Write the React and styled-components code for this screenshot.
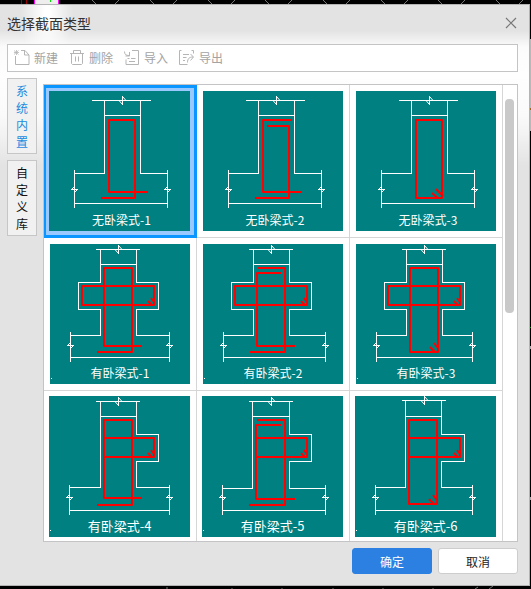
import React, { useState } from "react";
import styled, { createGlobalStyle } from "styled-components";

const GlobalStyle = createGlobalStyle`
  *, *::before, *::after { box-sizing: border-box; }
  body {
    margin: 0;
    background: #000;
    font-family: "Noto Sans CJK SC", "Noto Sans", sans-serif;
    font-size: 12px;
  }
  button { font: inherit; color: inherit; }
`;

const Desktop = styled.div`
  position: relative;
  display: flex;
  height: 100vh;
  min-height: 400px;
  padding: 4px 1px 3px 0;
  overflow: hidden;
`;

const Backdrop = styled.svg`
  position: absolute;
  inset: 0;
  width: 100%;
  height: 100%;
`;

const Dialog = styled.section`
  position: relative;
  flex: 1;
  min-width: 0;
  display: flex;
  flex-direction: column;
  border: solid #b4b4b4;
  border-width: 1px 1px 1px 0;
  background:
    radial-gradient(ellipse 26px 60px at 47px 8px, #ffffff 10%, #ffffff00 100%),
    linear-gradient(#e3e3e3 26px, #fbfbfb 42px, #fefefe 70px, #fafafa 110px, #f0f0f0 135px, #e3e3e3 160px);
`;

const TitleBar = styled.header`
  display: flex;
  align-items: center;
  justify-content: space-between;
  height: 39px;
  padding: 0 12px 3px 7px;
`;

const Title = styled.h1`
  margin: 0;
  font-size: 14px;
  line-height: 20px;
  font-weight: 400;
  color: #333;
`;

const CloseButton = styled.button`
  display: flex;
  padding: 0;
  border: 0;
  background: none;
  color: #777;
`;

const Toolbar = styled.div`
  display: flex;
  align-items: center;
  gap: 11px;
  height: 28px;
  margin: 0 11px 0 7px;
  padding: 0 6px;
  border: 1px solid #c3c4c6;
  background: #fff;
`;

const Tool = styled.button`
  display: flex;
  align-items: center;
  gap: 4px;
  padding: 0;
  border: 0;
  background: none;
  color: #a3a3a3;
  line-height: 18px;
`;

const Body = styled.div`
  flex: 1;
  min-height: 0;
  display: flex;
  gap: 6px;
  padding: 6px 11px 0 7px;
`;

const TabList = styled.div`
  display: flex;
  flex-direction: column;
  gap: 6px;
`;

const Tab = styled.button`
  width: 30px;
  padding: 3px 8px;
  border: 1px solid #c6c6c6;
  background: #f1f1f1;
  color: ${(p) => (p.$active ? "#1b8be0" : "#111")};
  line-height: 17px;
  word-break: break-all;
`;

const Gallery = styled.div`
  flex: 1;
  min-width: 0;
  display: flex;
  margin-top: 6px;
  border: 1px solid #c4c4c6;
  background: #fff;
  overflow: hidden;
`;

const Grid = styled.div`
  flex: 1;
  display: grid;
  grid-template-columns: repeat(auto-fill, 153px);
  grid-auto-rows: 153px;
  align-content: start;
`;

const Cell = styled.button`
  display: grid;
  place-items: end;
  padding: ${(p) => (p.$selected ? "0 5px 5px 0" : "0 6px 6px 0")};
  border: solid #d6d6d6;
  border-width: 0 1px 1px 0;
  background: #fff;
  ${(p) =>
    p.$selected &&
    `
    border-color: #0a95ff;
    box-shadow: inset 2px 3px #0a95ff, inset -2px -2px #0a95ff;
    background: #99c9ff;
  `}
`;

const Figure = styled.figure`
  display: grid;
  width: ${(p) => p.$width}px;
  height: ${(p) => p.$height}px;
  margin: ${(p) => (p.$selected ? "0 1px 1px 0" : "0")};
  background: #008080;
  color: #fff;
`;

const Drawing = styled.svg`
  grid-area: 1 / 1;
`;

const Caption = styled.figcaption`
  grid-area: 1 / 1;
  align-self: end;
  padding-bottom: 2px;
  padding-left: ${(p) => (p.$shift ? 4 : 0)}px;
  text-align: center;
  font-size: ${(p) => (p.$large ? 13 : 12)}px;
  line-height: 18px;
`;

const ScrollTrack = styled.div`
  flex: none;
  width: 14px;
  padding: 14px 3px 0 2px;
`;

const ScrollThumb = styled.div`
  height: 214px;
  border-radius: 4px;
  background: #c9c9c9;
`;

const Footer = styled.footer`
  display: flex;
  justify-content: flex-end;
  gap: 6px;
  padding: 6px 11px 11px;
`;

const Action = styled.button`
  width: 80px;
  height: 26px;
  padding: 0;
  border: 1px solid ${(p) => (p.$primary ? "#2b80e2" : "#cdcdcd")};
  border-radius: 3px;
  background: ${(p) => (p.$primary ? "#2b80e2" : "#fff")};
  color: ${(p) => (p.$primary ? "#fff" : "#222")};
`;

const toolIcons = {
  add: (
    <>
      <path d="M7 .5h4l4 4.500v9.500h-13.500v-8.500M10.500 .5v4.500h4.500" />
      <path d="M0 .5l4.500 4M4.500 .5l-4.500 4M0 2.500h5M2.500 0v5" strokeWidth=".8" />
    </>
  ),
  remove: (
    <>
      <path d="M1 3.500h14M4.500 3.500v-3h7v3M2.500 3.500v10l1 1h9l1-1v-10" />
      <path d="M6.500 6.500v5M9.500 6.500v5" />
    </>
  ),
  load: (
    <>
      <path d="M8 .5h6.500v14h-12.500v-5" />
      <path d="M.5 1.500c0 3 1.500 4 4.500 4M5.500 2v4h-4" />
      <path d="M3.500 8.500h2M7 8.500h4.500M5 11.500h6" />
    </>
  ),
  save: (
    <>
      <path d="M2.500 .5h-2v14h8M12.500 .5h2v3" />
      <path d="M4 4.500h6M4 7.500h3.500M4 10.500h2" />
      <path d="M8.500 12.500c0-4 2-5.500 5.500-5.500M11.500 4l3 3-3 3.500" />
    </>
  ),
};

const tools = [
  { icon: "add", label: "新建" },
  { icon: "remove", label: "删除" },
  { icon: "load", label: "导入" },
  { icon: "save", label: "导出" },
];

const base = (c1, c2, y, f1, f2, top, bottom, v1, v2) =>
  `M${c1} 24.500H${c2}M${f1} ${v1}V${v2}M${f2} ${v1}V${v2}M${f1} ${bottom}H${f2}` +
  `M${c1} ${y}V${top}H${f1}M${c2} ${y}V${top}H${f2}`;

const plain = {
  white: base(55.5, 91.5, 9.5, 25.5, 118.5, 82.5, 112.5, 79, 117) + "M43 9.500H102",
  breaks: [[25.5, 98.5], [118.5, 98.5]],
  cut: [73, 9.5],
};

const cross = (right) => ({
  white:
    "M46 5.500H90M50.500 20.500H86.500" +
    "M50.500 5.500V38.500H28.500V65.500H50.500V91.500H20.500" +
    `M86.500 5.500V38.500H108.500V65.500H86.500V91.500H${right}` +
    `M20.500 88V118M${right} 88V118M20.500 113.500H${right}`,
  breaks: [[20.5, 101.5], [right, 101.5]],
  cut: [68, 5.5],
});

const side = ({ x, c2, wing, left, right, cut, foot }) => ({
  white:
    `M47 ${cut}H91M${x} 20.500H${c2}` +
    `M${x} ${cut}V${foot}H${left}` +
    `M${c2} ${cut}V38.500H${wing}V65.500H${c2}V${foot}H${right}` +
    `M${left} 89V119M${right} 89V119M${left} 114.500H${right}`,
  breaks: [[left, 101.5], [right, 101.5]],
  cut: [69, cut],
});

const sections = [
  {
    name: "无卧梁式-1", width: 141, height: 140, shift: true,
    ...plain,
    red: "M99 101H60V29H86V107H52",
  },
  {
    name: "无卧梁式-2", width: 140, height: 140, shift: true,
    ...plain,
    red: "M89 29H60V101H99M64 35H86V107H52",
  },
  {
    name: "无卧梁式-3", width: 140, height: 140, shift: true,
    ...plain,
    red: "M60 29H86V107H60ZM80 98l7 7M76 102l6 5",
  },
  {
    name: "有卧梁式-1", width: 140, height: 140, dot: true,
    ...cross(119.5),
    red: "M92 102H54V24H82V108H47M32 42H104V61H32ZM101 54l3 4M98 57l4 4",
  },
  {
    name: "有卧梁式-2", width: 140, height: 140, dot: true,
    ...cross(122.5),
    red: "M55 24H82V108H47M78 29H54V102H92M32 42H104V61H32ZM101 54l3 4M98 57l4 4",
  },
  {
    name: "有卧梁式-3", width: 140, height: 140, dot: true,
    ...cross(116.5),
    red: "M54 24H82V108H54ZM32 42H104V61H32ZM101 54l3 4M98 57l4 4M78 99l4 5M74 103l5 5",
  },
  {
    name: "有卧梁式-4", width: 141, height: 141, dot: true, large: true,
    ...side({ x: 51.5, c2: 87.5, wing: 109.5, left: 20.5, right: 120.5, cut: 5.5, foot: 91.5 }),
    red: "M93 102H55V24H83V109H48M55 42H105V61H55M102 54l3 4M99 57l4 4",
  },
  {
    name: "有卧梁式-5", width: 141, height: 141, dot: true, large: true,
    ...side({ x: 50.5, c2: 87.5, wing: 109.5, left: 20.5, right: 123.5, cut: 5.5, foot: 92.5 }),
    red: "M55 24H83V109H47M79 29H54V103H93M54 42H105V61H54M102 54l3 4M99 57l4 4",
  },
  {
    name: "有卧梁式-6", width: 141, height: 141, dot: true, large: true,
    ...side({ x: 50.5, c2: 86.5, wing: 109.5, left: 20.5, right: 117.5, cut: 4.5, foot: 91.5 }),
    red: "M54 24H82V108H54ZM54 42H105V61H54M102 54l3 4M99 57l4 4M78 99l4 5M74 103l5 5",
  },
];

function SectionDrawing({ section }) {
  const { width, height, white, red, breaks, cut, dot } = section;
  return (
    <Drawing width={width} height={height} viewBox={`0 0 ${width} ${height}`} fill="none" aria-hidden="true">
      <g stroke="#fff" strokeWidth="1">
        <path d={white} shapeRendering="crispEdges" />
        {breaks.map(([x, y]) => (
          <path key={x} d={`M${x - 3.5} ${y}h7M${x - 3} ${y}l3 -3v6l3 -3`} />
        ))}
        <path d={`M${cut[0] + 0.5} ${cut[1] - 4.5}v9M${cut[0] - 3} ${cut[1]}l3 3.500M${cut[0] + 0.5} ${cut[1] - 4}l3.500 4`} />
        {dot && <path d="M1 134.500h1" />}
      </g>
      <path d={red} stroke="#f00" strokeWidth="2" strokeLinejoin="round" />
    </Drawing>
  );
}

function Scene() {
  const xs = [92, 150, 208, 265, 323, 381, 438, 496];
  return (
    <Backdrop aria-hidden="true">
      <path d={xs.map((x) => `M${x} 0l4 4M${x + 27} 0l-4 4`).join("")} stroke="#777" />
      <path d="M21.500 0v4M26.500 0v4" stroke="#900" />
      <path d="M34 0h25v4H34z" fill="#eee" />
      <path d="M34.500 0v4M58.500 0v4" stroke="#f0f" />
      <path d="M50.500 0v2" stroke="#0d0" />
      <path d="M530 39h1v92h-1z" fill="#b8b8b8" />
      <path d="M530 108h1v2h-1z" fill="#a60" />
      <path d="M530 327h1v1h-1z" fill="#0a0" />
      <path d="M530 346h1v3h-1zM530 497h1v3h-1z" fill="#aaa" />
      <path d="M167 587v2M232 588v1M282 588v1M333 588v1M383 588v1M433 588v1M475 589l3-2M489 589l4-3" stroke="#777" />
    </Backdrop>
  );
}

export default function App() {
  const [selected, setSelected] = useState(0);
  const [tab, setTab] = useState(0);
  return (
    <>
      <GlobalStyle />
      <Desktop>
        <Scene />
        <Dialog role="dialog" aria-labelledby="dialog-title">
          <TitleBar>
            <Title id="dialog-title">选择截面类型</Title>
            <CloseButton aria-label="关闭">
              <svg width="12" height="12" viewBox="0 0 12 12" stroke="currentColor" strokeWidth="1.2">
                <path d="M1 1l10 10M11 1L1 11" />
              </svg>
            </CloseButton>
          </TitleBar>
          <Toolbar role="toolbar">
            {tools.map(({ icon, label }) => (
              <Tool key={icon}>
                <svg width="16" height="16" viewBox="0 0 16 16" fill="none" stroke="#b5b5b5" aria-hidden="true">
                  {toolIcons[icon]}
                </svg>
                {label}
              </Tool>
            ))}
          </Toolbar>
          <Body>
            <TabList role="tablist">
              {["系统内置", "自定义库"].map((label, i) => (
                <Tab key={label} role="tab" aria-selected={tab === i} $active={tab === i} onClick={() => setTab(i)}>
                  {label}
                </Tab>
              ))}
            </TabList>
            <Gallery>
              <Grid>
                {sections.map((section, i) => (
                  <Cell
                    key={section.name}
                    aria-pressed={selected === i}
                    $selected={selected === i}
                    onClick={() => setSelected(i)}
                  >
                    <Figure $width={section.width} $height={section.height} $selected={selected === i}>
                      <SectionDrawing section={section} />
                      <Caption $shift={section.shift} $large={section.large}>{section.name}</Caption>
                    </Figure>
                  </Cell>
                ))}
              </Grid>
              <ScrollTrack>
                <ScrollThumb />
              </ScrollTrack>
            </Gallery>
          </Body>
          <Footer>
            <Action $primary>确定</Action>
            <Action>取消</Action>
          </Footer>
        </Dialog>
      </Desktop>
    </>
  );
}
